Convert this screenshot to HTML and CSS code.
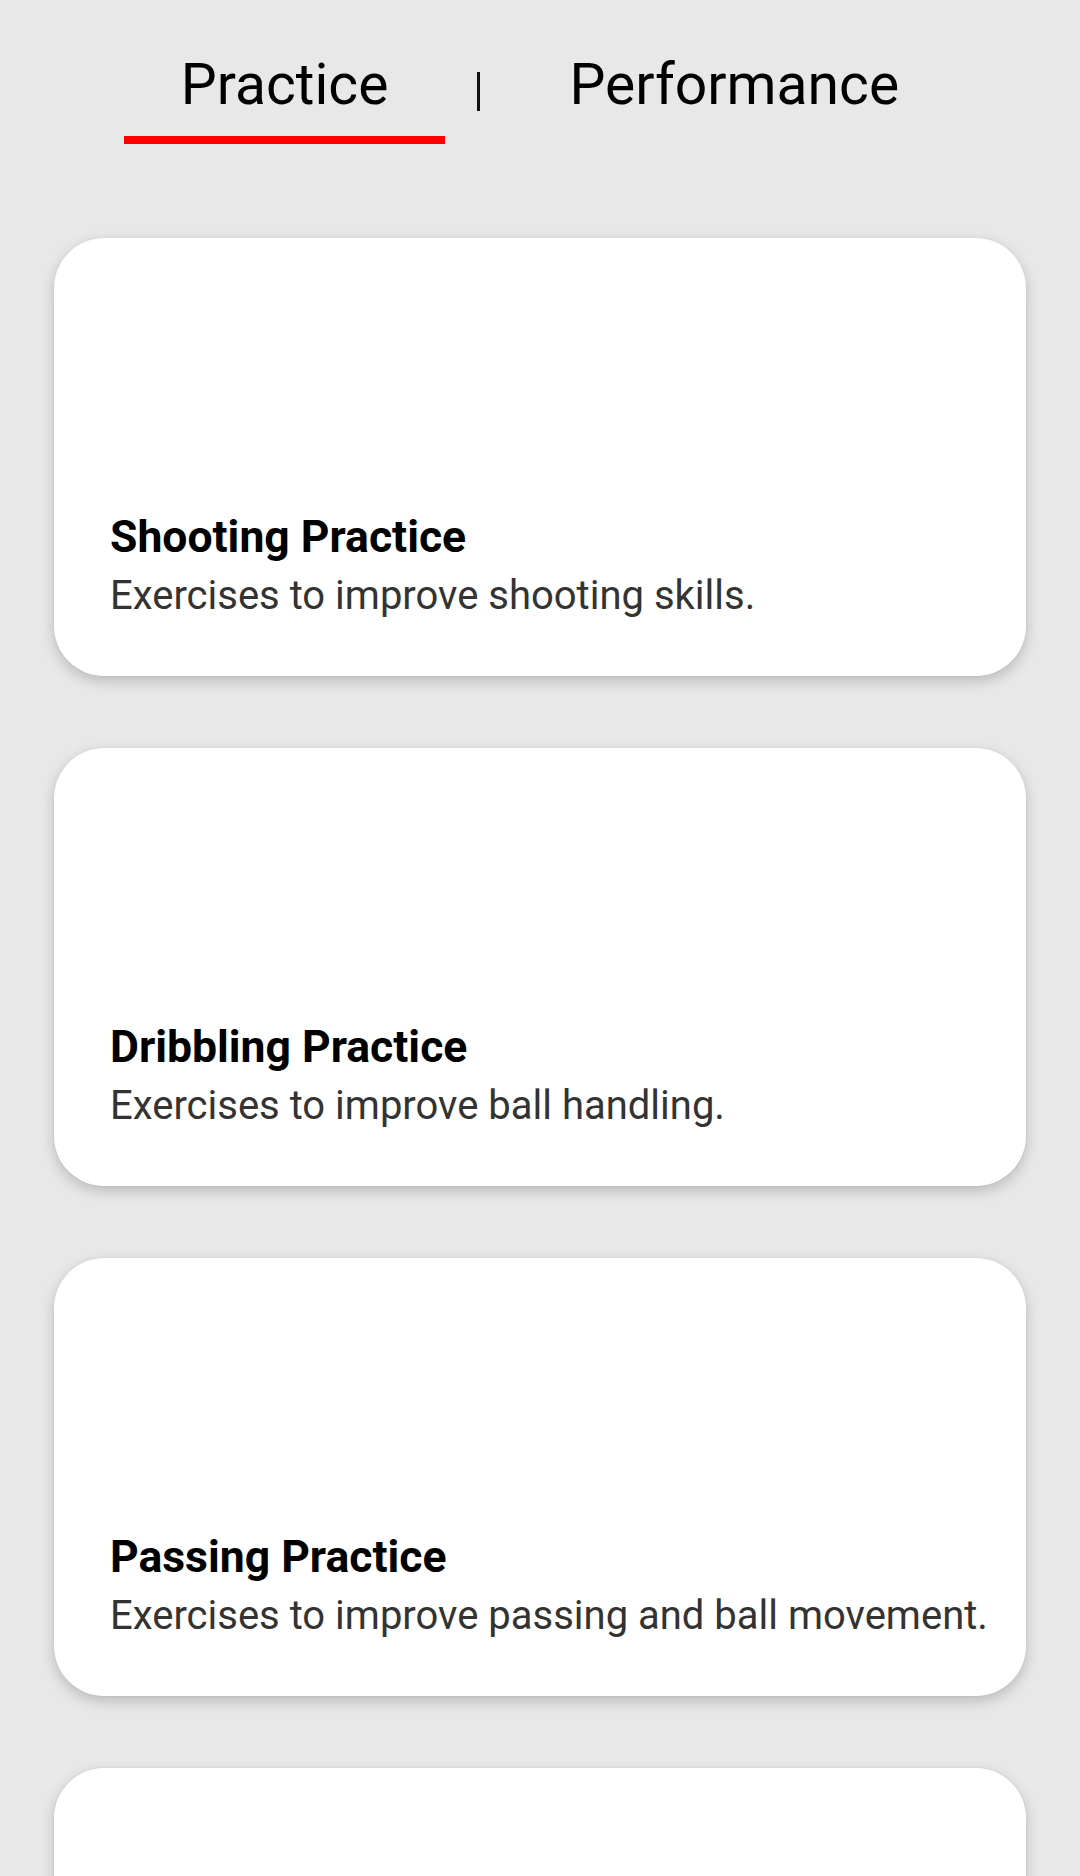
FILE: index.html
```html
<!DOCTYPE html>
<html lang="en">
<head>
<meta charset="utf-8">
<title>Practice</title>
<link rel="stylesheet" href="styles.css">
</head>
<body>
<div class="screen">
  <nav class="tabs">
    <div class="tab tab-active">
      <span class="tab-label">Practice</span>
      <span class="tab-bar"></span>
    </div>
    <span class="divider"></span>
    <div class="tab">
      <span class="tab-label">Performance</span>
      <span class="tab-bar"></span>
    </div>
  </nav>
  <main class="list">
    <article class="card">
      <h2 class="card-title">Shooting Practice</h2>
      <p class="card-desc">Exercises to improve shooting skills.</p>
    </article>
    <article class="card">
      <h2 class="card-title">Dribbling Practice</h2>
      <p class="card-desc">Exercises to improve ball handling.</p>
    </article>
    <article class="card">
      <h2 class="card-title">Passing Practice</h2>
      <p class="card-desc">Exercises to improve passing and ball movement.</p>
    </article>
    <article class="card"></article>
  </main>
</div>
</body>
</html>
```
FILE: styles.css
```css
html, body {
  margin: 0;
  padding: 0;
}
body {
  background: #e8e8e8;
  font-family: Roboto, "Noto Sans", "Liberation Sans", sans-serif;
  width: 1080px;
  height: 1876px;
  overflow: hidden;
}
.screen {
  display: flex;
  flex-direction: column;
}
.tabs {
  display: flex;
  justify-content: center;
  align-items: flex-start;
  gap: 32px;
  padding-top: 52px;
  height: 185px;
  box-sizing: border-box;
}
.tab {
  display: flex;
  flex-direction: column;
  align-items: center;
  padding: 0 57px;
}
.tab-label {
  font-size: 57px;
  line-height: 66px;
  color: #000;
  font-weight: 400;
  white-space: nowrap;
}
.tab-bar {
  display: block;
  height: 8px;
  margin-top: 18px;
  align-self: stretch;
  margin-left: -57px;
  margin-right: -57px;
  background: transparent;
}
.tab-active .tab-bar {
  background: #ff0000;
}
.divider {
  width: 3px;
  height: 39px;
  margin-top: 20px;
  background: #111;
}
.list {
  display: flex;
  flex-direction: column;
  gap: 72px;
  padding: 53px 54px 0;
}
.card {
  background: #fff;
  border-radius: 50px;
  height: 438px;
  box-sizing: border-box;
  padding: 0 20px 57px 56px;
  display: flex;
  flex-direction: column;
  justify-content: flex-end;
  flex-shrink: 0;
  box-shadow: 0 5px 14px rgba(0, 0, 0, 0.2), 0 0 2px rgba(0, 0, 0, 0.08);
}
.card-title {
  margin: 0;
  font-size: 44.5px;
  line-height: 50px;
  font-weight: 700;
  color: #000;
  white-space: nowrap;
}
.card-desc {
  margin: 10px 0 0;
  font-size: 40px;
  line-height: 47px;
  color: #333;
  white-space: nowrap;
}
```
